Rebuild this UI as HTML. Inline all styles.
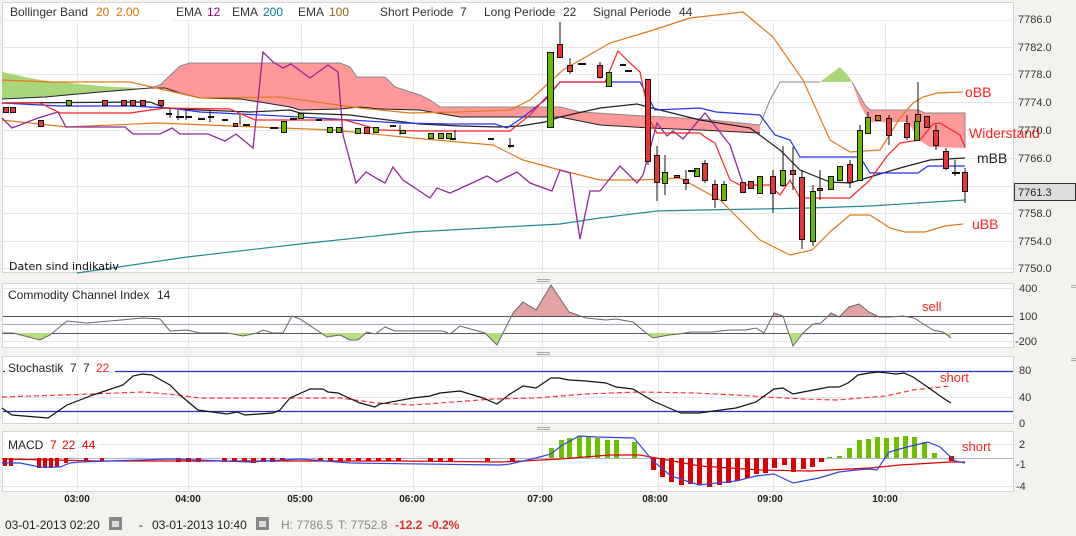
<!DOCTYPE html>
<html><head><meta charset="utf-8"><style>
html,body{margin:0;padding:0;background:#f3f2ee;}
svg{display:block;font-family:"Liberation Sans",Arial,sans-serif;}
</style></head><body>
<svg width="1076" height="536" viewBox="0 0 1076 536" xmlns="http://www.w3.org/2000/svg">
<defs>
<clipPath id="cciTop"><rect x="0" y="280" width="1014" height="36"/></clipPath>
<clipPath id="cciBot"><rect x="0" y="333" width="1014" height="20"/></clipPath>
</defs>
<rect width="1076" height="536" fill="#f3f2ee"/>
<rect x="2.5" y="2.5" width="1011" height="270" fill="#fff" stroke="#d4d4d4"/>
<rect x="2.5" y="283.5" width="1011" height="64" fill="#fff" stroke="#d4d4d4"/>
<rect x="2.5" y="356.5" width="1011" height="67" fill="#fff" stroke="#d4d4d4"/>
<rect x="2.5" y="431.5" width="1011" height="60" fill="#fff" stroke="#d4d4d4"/>
<g stroke="#e6e6e6" stroke-width="1">
<path d="M3 19.5H1013M3 47.5H1013M3 74.5H1013M3 102.5H1013M3 130.5H1013M3 158.5H1013M3 186.5H1013M3 213.5H1013M3 241.5H1013M3 268.5H1013"/>
<path d="M77.5 22V272M188.5 22V272M301.5 22V272M413.5 22V272M542.5 22V272M658.5 22V272M773.5 22V272M885.5 22V272"/>
<path d="M77.5 284V347M188.5 284V347M301.5 284V347M413.5 284V347M542.5 284V347M658.5 284V347M773.5 284V347M885.5 284V347"/>
<path d="M77.5 357V423M188.5 357V423M301.5 357V423M413.5 357V423M542.5 357V423M658.5 357V423M773.5 357V423M885.5 357V423"/>
<path d="M77.5 432V491M188.5 432V491M301.5 432V491M413.5 432V491M542.5 432V491M658.5 432V491M773.5 432V491M885.5 432V491"/>
<path d="M3 288.5H1013M3 341.5H1013M3 444.5H1013M3 486.5H1013M3 397.5H1013"/>
</g>
<rect x="3" y="3" width="1010" height="17" fill="#fff"/>
<path d="M3 20.5H160M172 20.5H1013" stroke="#eee"/>
<g font-size="12" fill="#333">
<text x="10" y="16">Bollinger Band<tspan fill="#e07000" x="96">20</tspan><tspan fill="#e07000" x="116">2.00</tspan></text>
<text x="176" y="16">EMA<tspan fill="#a3007e" x="207">12</tspan></text>
<text x="232" y="16">EMA<tspan fill="#007a8c" x="263">200</tspan></text>
<text x="298" y="16">EMA<tspan fill="#8a6418" x="329">100</tspan></text>
<text x="380" y="16">Short Periode<tspan x="460">7</tspan></text>
<text x="484" y="16">Long Periode<tspan x="563">22</tspan></text>
<text x="593" y="16">Signal Periode<tspan x="679">44</tspan></text>
</g>
<polygon points="2,72 40,80 70,83 100,86 138,88 130,90 100,92 45,97 2,99" fill="#a9d67a"/>
<polygon points="150,88 160,85 180,66 190,63 340,63 350,67 357,77 385,77 395,87 420,95 430,100 440,107 530,107 530,117 460,117 420,110 380,109 360,107 340,109 300,110 290,107 260,102 240,99 200,98 180,93 165,88" fill="#f99" />
<polyline points="150,88 160,85 180,66 190,63 340,63 350,67 357,77 385,77 395,87 420,95 430,100 440,107 530,107" fill="none" stroke="#888"/>
<polyline points="2,99 45,97 100,92 150,88 165,88 180,93 200,98 240,99 260,102 290,107 300,110 340,109 360,107 380,109 420,110 460,117 530,117" fill="none" stroke="#222"/>
<polygon points="530,107 560,107 580,112 645,116 700,119 760,125 760,133 700,130 650,128 600,125 560,117 530,117" fill="#f99"/>
<polyline points="530,107 560,107 580,112 645,116 700,119 760,125 770,100 780,82 820,82" fill="none" stroke="#888"/>
<polyline points="530,117 560,117 600,125 650,128 700,130 760,133" fill="none" stroke="#222"/>
<polygon points="820,82 840,67 850,78 852,82" fill="#a9d67a"/>
<polygon points="852,82 865,105 870,110 918,110 925,113 965,113 965,148 930,147 920,141 908,122 870,122 860,105" fill="#f99"/>
<polyline points="852,82 865,105 870,110 918,110 925,113 965,113 965,148" fill="none" stroke="#888"/>
<polyline points="77,273 187,257 300,244 413,232 523,226 560,224 600,218 657,211 700,210 760,209 810,208 870,206 965,200" fill="none" stroke="#1f8a96" stroke-width="1.2"/>
<polyline points="2,80 50,82 130,82 200,98 280,97 360,108 410,113 460,112 510,110 530,100 563,70 610,43 647,32 690,18 743,12 773,37 803,80 830,140 850,152 880,150 900,118 913,103 923,97 937,93 963,92" fill="none" stroke="#e07a1a" stroke-width="1.2"/>
<polyline points="2,120 67,127 157,123 207,125 333,130 413,138 493,145 523,160 560,170 600,180 640,180 680,178 720,200 760,240 790,255 812,250 830,232 850,215 870,215 890,228 905,232 925,232 945,226 963,224" fill="none" stroke="#e07a1a" stroke-width="1.2"/>
<polyline points="2,118 12,128 38,118 58,112 66,127 125,127 133,134 160,134 172,128 180,134 208,134 225,141 236,134 253,148 263,52 273,62 283,68 291,64 310,78 328,65 338,72 343,135 356,183 366,172 376,178 385,183 393,167 403,180 430,198 437,188 450,193 470,184 487,176 497,182 517,172 530,183 552,191 560,170 570,173 580,239 590,191 600,191 620,166 637,183 643,175 657,123 667,136 673,131 683,139 705,113 730,145 745,190" fill="none" stroke="#8e2a96" stroke-width="1.3"/>
<polyline points="2,103 150,102 165,108 200,110 250,112 290,110 300,113 350,115 380,119 420,124 460,126 500,127 520,126 545,122 560,117 600,108 637,104 660,110 700,120 750,128 780,150 800,170 830,182 850,183 870,177 900,168 930,160 965,158" fill="none" stroke="#222" stroke-width="1.2"/>
<polyline points="2,103 60,106 130,106 170,108 200,112 300,117 350,120 400,123 450,124 495,124 507,128 522,118 545,100 560,82 640,82 655,110 700,108 716,112 760,115 775,135 790,140 800,157 860,157 870,173 918,173 928,166 965,166" fill="none" stroke="#2233ee" stroke-width="1.2"/>
<polyline points="2,103 40,103 60,113 130,113 165,108 230,109 255,120 345,120 380,130 420,131 510,131 530,115 560,82 605,82 618,51 630,63 640,72 650,120 657,133 700,133 705,137 715,143 730,180 740,185 770,185 780,195 790,180 800,198 850,198 870,180 887,156 900,143 920,140 933,124 940,123 960,135 965,147" fill="none" stroke="#f22" stroke-width="1.2"/>
<g stroke="#111" stroke-width="1">
<path d="M560 22V57M570 58V74M600 62V79M648 79V165M657 146V201M665 155V195M686 170V190M705 160V183M715 180V208M724 181V201M773 170V213M783 146V187M793 147V190M802 170V249M813 185V246M820 170V200M850 160V188M860 125V180M868 112V133M889 115V145M907 115V140M918 82V121M936 125V150M946 148V170M955 160V176M965 168V203"/>
<path d="M170 108V118M178 110V120M186 110V120M210 110V122M240 115V125M400 125V135M455 130V140M510 138V148"/>
</g>
<g stroke="#111" stroke-width="1">
<rect x="547.5" y="52.5" width="6" height="75" fill="#6ab800"/>
<rect x="557.5" y="44.5" width="5" height="13" fill="#e8353a"/>
<rect x="567.5" y="65.5" width="5" height="6" fill="#e8353a"/>
<rect x="597.5" y="65.5" width="5" height="12" fill="#e8353a"/>
<rect x="606.5" y="72.5" width="5" height="14" fill="#6ab800"/>
<rect x="645.5" y="79.5" width="5" height="82" fill="#e8353a"/>
<rect x="654.5" y="155.5" width="5" height="27" fill="#e8353a"/>
<rect x="662.5" y="172.5" width="5" height="11" fill="#6ab800"/>
<rect x="674.5" y="175.5" width="5" height="2" fill="#e8353a"/>
<rect x="683.5" y="179.5" width="5" height="4" fill="#e8353a"/>
<rect x="694.5" y="168.5" width="5" height="8" fill="#6ab800"/>
<rect x="702.5" y="163.5" width="5" height="17" fill="#e8353a"/>
<rect x="712.5" y="184.5" width="5" height="15" fill="#e8353a"/>
<rect x="721.5" y="184.5" width="5" height="16" fill="#6ab800"/>
<rect x="740.5" y="182.5" width="5" height="10" fill="#e8353a"/>
<rect x="748.5" y="181.5" width="5" height="7" fill="#e8353a"/>
<rect x="757.5" y="176.5" width="5" height="17" fill="#6ab800"/>
<rect x="770.5" y="176.5" width="5" height="17" fill="#e8353a"/>
<rect x="780.5" y="170.5" width="5" height="15" fill="#6ab800"/>
<rect x="790.5" y="170.5" width="5" height="4" fill="#e8353a"/>
<rect x="799.5" y="177.5" width="5" height="62" fill="#e8353a"/>
<rect x="810.5" y="191.5" width="5" height="50" fill="#6ab800"/>
<rect x="817.5" y="188.5" width="5" height="2" fill="#e8353a"/>
<rect x="828.5" y="176.5" width="5" height="13" fill="#6ab800"/>
<rect x="837.5" y="166.5" width="5" height="14" fill="#6ab800"/>
<rect x="847.5" y="164.5" width="5" height="18" fill="#e8353a"/>
<rect x="857.5" y="130.5" width="5" height="50" fill="#6ab800"/>
<rect x="865.5" y="117.5" width="5" height="16" fill="#6ab800"/>
<rect x="875.5" y="115.5" width="5" height="5" fill="#b8781e"/>
<rect x="886.5" y="118.5" width="5" height="17" fill="#e8353a"/>
<rect x="904.5" y="123.5" width="5" height="14" fill="#e8353a"/>
<rect x="914.5" y="121.5" width="5" height="19" fill="#6ab800"/>
<rect x="915.5" y="114.5" width="5" height="7" fill="#b8781e"/>
<rect x="924.5" y="116.5" width="5" height="11" fill="#e8353a"/>
<rect x="933.5" y="130.5" width="5" height="15" fill="#e8353a"/>
<rect x="943.5" y="151.5" width="5" height="17" fill="#e8353a"/>
<rect x="962.5" y="172.5" width="5" height="19" fill="#e8353a"/>
<rect x="3.5" y="107.5" width="5" height="5" fill="#e8353a"/>
<rect x="10.5" y="107.5" width="5" height="5" fill="#e8353a"/>
<rect x="38.5" y="120.5" width="5" height="6" fill="#e8353a"/>
<rect x="66.5" y="100.5" width="5" height="5" fill="#6ab800"/>
<rect x="102.5" y="100.5" width="5" height="5" fill="#e8353a"/>
<rect x="121.5" y="100.5" width="5" height="5" fill="#e8353a"/>
<rect x="130.5" y="100.5" width="5" height="5" fill="#e8353a"/>
<rect x="140.5" y="100.5" width="5" height="5" fill="#e8353a"/>
<rect x="158.5" y="100.5" width="5" height="5" fill="#e8353a"/>
<rect x="233.5" y="123.5" width="4" height="3" fill="#e8353a"/>
<rect x="281.5" y="121.5" width="5" height="11" fill="#6ab800"/>
<rect x="298.5" y="113.5" width="5" height="5" fill="#6ab800"/>
<rect x="327.5" y="127.5" width="5" height="5" fill="#6ab800"/>
<rect x="336.5" y="127.5" width="5" height="5" fill="#6ab800"/>
<rect x="355.5" y="128.5" width="5" height="5" fill="#6ab800"/>
<rect x="364.5" y="127.5" width="5" height="6" fill="#e8353a"/>
<rect x="373.5" y="127.5" width="5" height="5" fill="#6ab800"/>
<rect x="400.5" y="130.5" width="5" height="3" fill="#6ab800"/>
<rect x="428.5" y="133.5" width="5" height="5" fill="#6ab800"/>
<rect x="438.5" y="133.5" width="5" height="5" fill="#6ab800"/>
<rect x="446.5" y="133.5" width="5" height="5" fill="#6ab800"/>
</g>
<g stroke="#111" stroke-width="2">
<path d="M166 114H172M176 117H184M186 117H192M198 119H205M208 117H214M222 120H228M243 125H250M270 128H278M290 119H297M316 120H322M390 126H396M450 139H456M488 139H494M508 146H514M578 64H586M620 65H626M625 71H632M688 171H696M952 173H960"/>
</g>
<text x="9" y="270" font-size="11" fill="#111" font-family="DejaVu Sans,sans-serif">Daten sind indikativ</text>
<g font-size="14" fill="#f22">
<text x="965" y="97">oBB</text>
<text x="969" y="138">Widerstand</text>
<text x="972" y="229">uBB</text>
</g>
<text x="977" y="163" font-size="14" fill="#222">mBB</text>
<g font-size="11" fill="#333">
<text x="1018" y="23">7786.0</text><text x="1018" y="51">7782.0</text><text x="1018" y="78">7778.0</text>
<text x="1018" y="106">7774.0</text><text x="1018" y="134">7770.0</text><text x="1018" y="162">7766.0</text>
<text x="1018" y="217">7758.0</text><text x="1018" y="245">7754.0</text><text x="1018" y="272">7750.0</text>
</g>
<rect x="1014.5" y="183.5" width="61" height="17" fill="#dcdcdc" stroke="#333"/>
<text x="1018" y="196" font-size="11" fill="#222">7761.3</text>
<g stroke="#aaa"><path d="M537 279.5H550M537 281.5H550M537 352.5H550M537 354.5H550M537 427.5H550M537 429.5H550M1071 285.5H1076M1071 287.5H1076M1071 358.5H1076M1071 360.5H1076"/></g>
<text x="8" y="299" font-size="12" fill="#222">Commodity Channel Index<tspan x="157">14</tspan></text>
<path d="M3 316.5H1013M3 333.5H1013" stroke="#556" stroke-width="1"/>
<path d="M3 324.5H1013" stroke="#9ab" stroke-width="1"/>
<g clip-path="url(#cciTop)"><polygon points="2,333 13,333 40,340 50,335 67,321 87,323 143,318 160,319 170,331 187,330 200,333 227,333 243,336 257,333 263,330 273,333 283,333 292,316 300,319 327,337 340,335 350,340 358,340 367,332 375,334 385,327 395,331 443,331 450,334 460,326 485,333 497,345 503,333 513,313 523,302 536,310 551,285 569,312 586,318 606,320 616,319 633,322 646,333 653,338 669,335 679,334 691,332 703,332 713,332 729,330 746,330 756,328 764,333 774,313 783,316 793,346 803,333 813,324 821,323 831,313 839,317 849,307 859,304 869,312 879,317 889,317 903,316 914,318 933,330 943,332 951,338 951,316 2,316" fill="#e3a3a3"/></g>
<g clip-path="url(#cciBot)"><polygon points="2,333 13,333 40,340 50,335 67,321 87,323 143,318 160,319 170,331 187,330 200,333 227,333 243,336 257,333 263,330 273,333 283,333 292,316 300,319 327,337 340,335 350,340 358,340 367,332 375,334 385,327 395,331 443,331 450,334 460,326 485,333 497,345 503,333 513,313 523,302 536,310 551,285 569,312 586,318 606,320 616,319 633,322 646,333 653,338 669,335 679,334 691,332 703,332 713,332 729,330 746,330 756,328 764,333 774,313 783,316 793,346 803,333 813,324 821,323 831,313 839,317 849,307 859,304 869,312 879,317 889,317 903,316 914,318 933,330 943,332 951,338 951,333 2,333" fill="#b5dd7e"/></g>
<polyline points="2,333 13,333 40,340 50,335 67,321 87,323 143,318 160,319 170,331 187,330 200,333 227,333 243,336 257,333 263,330 273,333 283,333 292,316 300,319 327,337 340,335 350,340 358,340 367,332 375,334 385,327 395,331 443,331 450,334 460,326 485,333 497,345 503,333 513,313 523,302 536,310 551,285 569,312 586,318 606,320 616,319 633,322 646,333 653,338 669,335 679,334 691,332 703,332 713,332 729,330 746,330 756,328 764,333 774,313 783,316 793,346 803,333 813,324 821,323 831,313 839,317 849,307 859,304 869,312 879,317 889,317 903,316 914,318 933,330 943,332 951,338" fill="none" stroke="#666" stroke-width="1"/>
<text x="922" y="311" font-size="13" fill="#f22">sell</text>
<g font-size="11" fill="#333"><text x="1019" y="292">400</text><text x="1019" y="320">100</text><text x="1015" y="345">-200</text></g>
<path d="M3 371.5H1013M3 411.5H1013" stroke="#2233bb" stroke-width="1.2"/>
<rect x="5" y="360" width="110" height="14" fill="#fff"/>
<text x="8" y="372" font-size="12" fill="#222">Stochastik<tspan x="70">7</tspan><tspan x="83">7</tspan><tspan x="96" fill="#f22">22</tspan></text>
<polyline points="2,397 93,394 143,392 167,394 200,398 300,398 340,398 377,403 413,405 440,403 493,399 536,398 586,394 639,392 696,393 736,395 766,397 803,399 836,400 886,396 913,390 949,386" fill="none" stroke="#f33" stroke-width="1.2" stroke-dasharray="5,3"/>
<polyline points="2,408 12,415 48,418 67,405 93,395 123,385 133,376 142,374 152,375 170,385 180,395 198,410 227,414 237,412 245,415 273,413 280,410 290,398 310,389 323,389 328,392 338,393 360,403 375,407 380,404 413,398 430,396 440,393 460,391 483,398 497,404 510,394 523,386 536,388 551,378 559,378 569,380 586,381 606,383 616,387 633,389 653,401 669,408 681,413 699,413 736,408 756,402 774,389 783,388 793,394 803,392 819,389 829,387 839,387 848,383 858,375 869,373 879,372 896,374 904,373 913,377 929,388 943,398 951,403" fill="none" stroke="#111" stroke-width="1.2"/>
<text x="940" y="382" font-size="13" fill="#f22">short</text>
<g font-size="11" fill="#333"><text x="1019" y="374">80</text><text x="1019" y="401">40</text><text x="1019" y="427">0</text></g>
<path d="M3 458.5H1013" stroke="#a8b8c8"/>
<g fill="#dd0000">
<rect x="3" y="458" width="4" height="8"/><rect x="9" y="458" width="4" height="8"/><rect x="37" y="458" width="4" height="10"/><rect x="43" y="458" width="4" height="10"/><rect x="49" y="458" width="4" height="10"/><rect x="55" y="458" width="4" height="9"/><rect x="64" y="458" width="4" height="5"/><rect x="84" y="458" width="4" height="4"/><rect x="100" y="458" width="4" height="3"/>
<rect x="176" y="458" width="5" height="4"/><rect x="186" y="458" width="5" height="4"/><rect x="196" y="458" width="5" height="4"/><rect x="222" y="458" width="5" height="4"/><rect x="232" y="458" width="5" height="4"/><rect x="242" y="458" width="5" height="4"/><rect x="251" y="458" width="5" height="5"/><rect x="261" y="458" width="5" height="4"/><rect x="270" y="458" width="5" height="4"/><rect x="280" y="458" width="5" height="3"/>
<rect x="318" y="458" width="5" height="3"/><rect x="328" y="458" width="5" height="3"/><rect x="338" y="458" width="5" height="3"/><rect x="346" y="458" width="5" height="3"/><rect x="356" y="458" width="5" height="3"/><rect x="366" y="458" width="5" height="3"/><rect x="376" y="458" width="5" height="3"/><rect x="386" y="458" width="5" height="3"/><rect x="396" y="458" width="5" height="3"/>
<rect x="428" y="458" width="5" height="3"/><rect x="438" y="458" width="5" height="3"/><rect x="448" y="458" width="5" height="3"/><rect x="485" y="458" width="5" height="3"/><rect x="510" y="458" width="5" height="3"/>
<rect x="651" y="458" width="5" height="12"/><rect x="660" y="458" width="5" height="19"/><rect x="669" y="458" width="5" height="24"/><rect x="679" y="458" width="5" height="27"/><rect x="688" y="458" width="5" height="26"/><rect x="697" y="458" width="5" height="27"/><rect x="707" y="458" width="5" height="29"/><rect x="717" y="458" width="5" height="27"/><rect x="726" y="458" width="5" height="25"/><rect x="735" y="458" width="5" height="23"/><rect x="745" y="458" width="5" height="20"/><rect x="754" y="458" width="5" height="16"/><rect x="763" y="458" width="5" height="15"/><rect x="772" y="458" width="5" height="10"/><rect x="782" y="458" width="5" height="7"/><rect x="791" y="458" width="5" height="14"/><rect x="801" y="458" width="5" height="11"/><rect x="810" y="458" width="5" height="9"/><rect x="819" y="458" width="5" height="4"/><rect x="949" y="456" width="5" height="5"/>
</g>
<g fill="#6cc000">
<rect x="549" y="448" width="5" height="10"/><rect x="559" y="440" width="5" height="18"/><rect x="567" y="438" width="5" height="20"/><rect x="577" y="436" width="5" height="22"/><rect x="586" y="437" width="5" height="21"/><rect x="595" y="438" width="5" height="20"/><rect x="605" y="440" width="5" height="18"/><rect x="614" y="440" width="5" height="18"/><rect x="632" y="442" width="5" height="16"/>
<rect x="827" y="457" width="5" height="1"/><rect x="837" y="456" width="5" height="2"/><rect x="847" y="448" width="5" height="10"/><rect x="857" y="440" width="5" height="18"/><rect x="866" y="439" width="5" height="19"/><rect x="875" y="437" width="5" height="21"/><rect x="884" y="438" width="5" height="20"/><rect x="894" y="437" width="5" height="21"/><rect x="903" y="436" width="5" height="22"/><rect x="912" y="437" width="5" height="21"/><rect x="922" y="442" width="5" height="16"/><rect x="932" y="453" width="5" height="5"/>
</g>
<polyline points="2,459 100,461 300,461 400,461 500,462 523,461 560,459 610,455 640,455 700,466 760,470 810,471 870,468 900,465 950,462 965,462" fill="none" stroke="#dd0000" stroke-width="1.2"/>
<polyline points="2,463 20,463 40,467 60,467 70,463 80,462 170,459 250,462 300,459 350,463 500,465 510,464 536,458 551,454 561,446 579,436 597,437 634,438 653,461 671,476 699,485 736,481 756,476 774,474 793,483 819,478 839,472 856,470 869,469 877,470 889,452 907,447 928,442 940,447 955,461 965,463" fill="none" stroke="#3344dd" stroke-width="1.2"/>
<rect x="5" y="436" width="95" height="15" fill="#fff"/>
<text x="8" y="449" font-size="12" fill="#222">MACD<tspan fill="#dd0000" x="50">7</tspan><tspan fill="#dd0000" x="62">22</tspan><tspan fill="#dd0000" x="82">44</tspan></text>
<text x="962" y="451" font-size="13" fill="#f22">short</text>
<g font-size="11" fill="#333"><text x="1019" y="448">2</text><text x="1016" y="468">-1</text><text x="1016" y="490">-4</text></g>
<g font-size="10" fill="#222" text-anchor="middle" font-weight="bold">
<text x="77" y="502">03:00</text><text x="188" y="502">04:00</text><text x="300" y="502">05:00</text><text x="412" y="502">06:00</text><text x="540" y="502">07:00</text><text x="655" y="502">08:00</text><text x="770" y="502">09:00</text><text x="885" y="502">10:00</text>
</g>
<g font-size="12">
<text x="5" y="529" fill="#222">03-01-2013 02:20</text>
<rect x="109" y="517" width="13" height="13" fill="#888"/><rect x="112" y="521" width="7" height="6" fill="#ddd"/>
<text x="139" y="529" fill="#222">-</text>
<text x="152" y="529" fill="#222">03-01-2013 10:40</text>
<rect x="256" y="517" width="13" height="13" fill="#888"/><rect x="259" y="521" width="7" height="6" fill="#ddd"/>
<text x="281" y="529" fill="#888">H: 7786.5</text>
<text x="338" y="529" fill="#888">T: 7752.8</text>
<text x="395" y="529" fill="#e03030" font-weight="bold">-12.2</text>
<text x="428" y="529" fill="#e03030" font-weight="bold">-0.2%</text>
</g>
</svg>
</body></html>
